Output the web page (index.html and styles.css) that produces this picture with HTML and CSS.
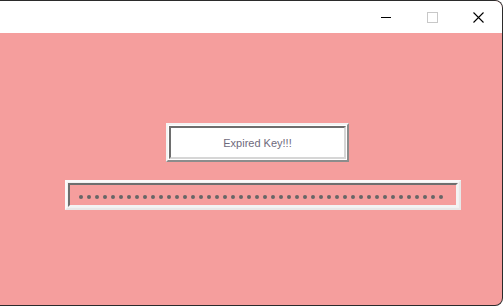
FILE: index.html
```html
<!DOCTYPE html>
<html lang="en">

<head>
    <meta charset="UTF-8">
    <meta name="viewport" content="width=device-width, initial-scale=1.0">
    <title>License</title>
    <link rel="stylesheet" href="styles.css">
</head>

<body>
    <div class="window">
        <div class="title-bar">
            <span class="ctl ctl-min"></span>
            <span class="ctl ctl-max"></span>
            <span class="ctl ctl-close">
                <svg width="11" height="11" viewBox="0 0 11 11">
                    <path d="M0.5 0.5 L10.5 10.5 M10.5 0.5 L0.5 10.5" stroke="#000" stroke-width="1.1" fill="none"/>
                </svg>
            </span>
        </div>

        <div class="content">
            <div class="key-box">
                <div class="key-inner">Expired Key!!!</div>
            </div>

            <div class="pass-box">
                <div class="pass-inner" id="dots"></div>
            </div>
        </div>
    </div>

    <script>
        // fill the masked field
        const dots = document.getElementById('dots');
        for (let i = 0; i < 46; i++) {
            const d = document.createElement('span');
            d.className = 'dot';
            dots.appendChild(d);
        }
    </script>
</body>

</html>
```

FILE: styles.css
```css
html,
body {
    margin: 0;
    padding: 0;
    background-color: #fff;
}

body {
    font-family: "Liberation Sans", Arial, sans-serif;
    width: 503px;
    height: 306px;
    overflow: hidden;
}

.window {
    box-sizing: border-box;
    width: 503px;
    height: 306px;
    border-top: 1px solid #2b2b2b;
    border-right: 1px solid #2b2b2b;
    border-bottom: 1px solid #2b2b2b;
    border-radius: 0 8px 8px 0;
    overflow: hidden;
    display: flex;
    flex-direction: column;
    background-color: #f59e9d;
}

.title-bar {
    height: 32px;
    background-color: #fff;
    display: flex;
    align-items: center;
    justify-content: flex-end;
    flex-shrink: 0;
}

.ctl {
    width: 46px;
    height: 32px;
    display: flex;
    align-items: center;
    justify-content: center;
}

.ctl-min::before {
    content: "";
    width: 10px;
    height: 1px;
    background-color: #000;
}

.ctl-max::before {
    content: "";
    width: 9px;
    height: 9px;
    border: 1px solid #c8c8c8;
}

.ctl-close {
    margin-right: 1px;
}

.content {
    display: flex;
    flex-direction: column;
    align-items: flex-start;
    padding-top: 90px;
}

.key-box {
    margin-left: 166px;
    width: 183px;
    height: 39px;
    box-sizing: border-box;
    border-top: 2px solid #f4f4f4;
    border-left: 2px solid #f4f4f4;
    border-right: 2px solid #8c8c8c;
    border-bottom: 2px solid #8c8c8c;
    background-color: #fff;
    padding: 1px;
}

.key-inner {
    box-sizing: border-box;
    height: 100%;
    border-top: 2px solid #6e6e6e;
    border-left: 2px solid #6e6e6e;
    border-right: 2px solid #d6d6d6;
    border-bottom: 2px solid #d6d6d6;
    display: flex;
    align-items: center;
    justify-content: center;
    font-size: 11px;
    color: #6e6a7c;
    padding-top: 1px;
}

.pass-box {
    margin-top: 18px;
    margin-left: 65px;
    width: 396px;
    height: 30px;
    box-sizing: border-box;
    border: 2px solid #fafafa;
    border-right-color: #e8e8e8;
    border-bottom-color: #e8e8e8;
    padding: 1px;
    background-color: #f2f2f2;
}

.pass-inner {
    box-sizing: border-box;
    height: 100%;
    border-top: 2px solid #6e6e6e;
    border-left: 2px solid #6e6e6e;
    border-right: 2px solid #f4f4f4;
    border-bottom: 2px solid #f4f4f4;
    background-color: #f59e9d;
    display: flex;
    align-items: center;
    gap: 4px;
    padding-left: 9px;
    padding-top: 3px;
}

.dot {
    width: 4px;
    height: 4px;
    border-radius: 50%;
    background-color: #666;
    flex-shrink: 0;
}
```
